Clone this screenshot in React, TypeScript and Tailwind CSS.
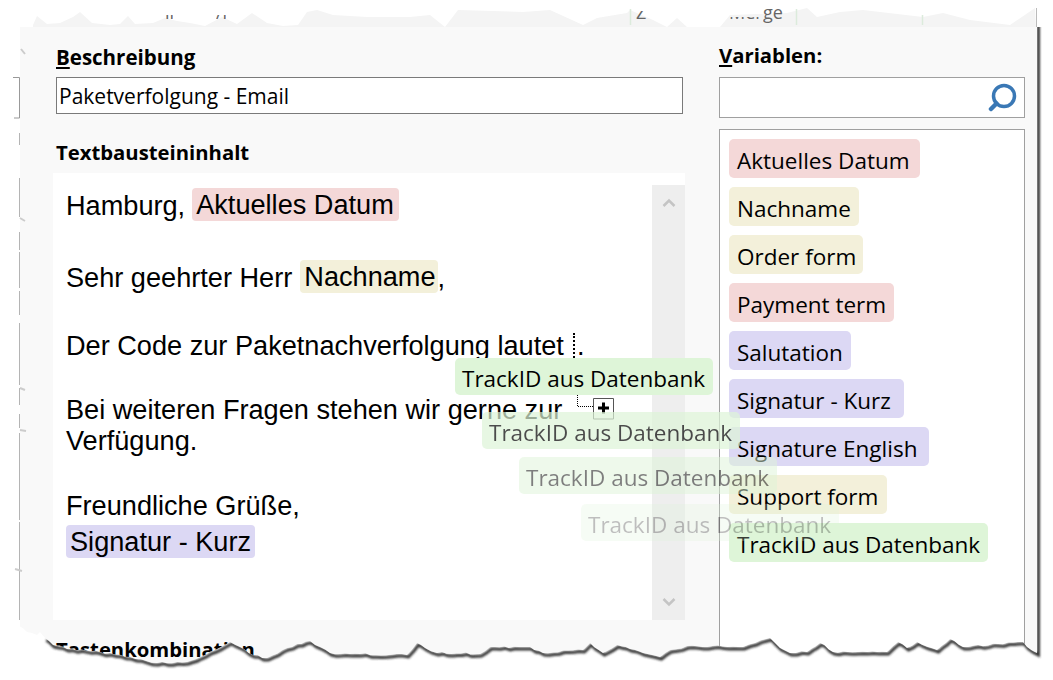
import { ReactNode } from 'react';

const RED = 'bg-[#f4d8d8]';
const YELLOW = 'bg-[#f3f0da]';
const PURPLE = 'bg-[#dcd8f4]';
const GREEN = 'bg-[#def5d8]';

const VARIABLES = [
  { label: 'Aktuelles Datum', color: RED, width: 'w-[191px]' },
  { label: 'Nachname', color: YELLOW, width: 'w-[130px]' },
  { label: 'Order form', color: YELLOW, width: 'w-[134px]' },
  { label: 'Payment term', color: RED, width: 'w-[165px]' },
  { label: 'Salutation', color: PURPLE, width: 'w-[122px]' },
  { label: 'Signatur - Kurz', color: PURPLE, width: 'w-[175px]' },
  { label: 'Signature English', color: PURPLE, width: 'w-[200px]' },
  { label: 'Support form', color: YELLOW, width: 'w-[158px]' },
  { label: 'TrackID aus Datenbank', color: GREEN, width: 'w-[259px]' },
];

const UI_FONT = "font-['Open_Sans',sans-serif]";

const TORN_BOTTOM = [
  19, 626, 27, 632, 37, 635, 40, 632, 45, 638, 53, 645, 67, 649, 100, 652, 130, 657, 157, 663, 187, 662, 200, 657, 215, 650, 230, 642, 240, 647, 253, 655, 267, 658, 287, 648, 297, 644, 310, 641, 320, 647, 330, 653, 360, 654, 407, 655, 417, 643, 425, 648, 437, 653, 480, 654, 490, 647, 523, 647, 530, 647, 543, 653, 583, 650, 590, 643, 603, 653, 617, 645, 630, 649, 643, 653, 660, 657, 670, 650, 687, 646, 743, 647, 755, 643, 770, 638, 780, 648, 790, 653, 807, 652, 820, 643, 833, 652, 887, 652, 898, 642, 907, 648, 917, 642, 937, 650, 950, 639, 963, 647, 1023, 642, 1027, 647, 1037, 653,
];

const TORN_TOP =
  '33,27 33,25 37,16 47,24 60,23 73,17 80,12 92,23 110,25 120,24 128,16 135,24 153,23 165,18 177,21 190,23 205,26 222,17 237,24 252,13 267,23 283,26 298,25 307,12 317,10 333,15 367,17 410,17 430,15 445,27 458,10 523,12 550,10 583,25 597,18 627,13 630,10 653,20 667,27 677,18 687,27 720,27 730,15 787,13 807,8 817,17 840,12 863,10 923,17 943,13 970,20 1010,25 1035,8 1036,27';

// adds small fixed wobble between the hand-read points so the tear doesn't look polygonal
function roughen(pts: number[]) {
  const out: string[] = [];
  for (let i = 0; i < pts.length - 2; i += 2) {
    const [x0, y0, x1, y1] = [pts[i], pts[i + 1], pts[i + 2], pts[i + 3]];
    const steps = Math.max(1, Math.round((x1 - x0) / 5));
    for (let s = 0; s < steps; s++) {
      const t = s / steps;
      const n = Math.sin((x0 + s * 5) * 12.9898) * 43758.5453;
      const wobble = s === 0 ? 0 : (n - Math.floor(n) - 0.5) * 2.2;
      out.push(`${(x0 + (x1 - x0) * t).toFixed(1)},${(y0 + (y1 - y0) * t + wobble).toFixed(1)}`);
    }
  }
  out.push(`${pts[pts.length - 2]},${pts[pts.length - 1]}`);
  return out;
}

function Chip({ color, children }: { color: string; children: ReactNode }) {
  return <span className={`inline-flex h-[33px] -translate-y-px items-center rounded-[4px] pt-[2px] pl-[4px] ${color}`}>{children}</span>;
}

function DragGhost({ className }: { className: string }) {
  return (
    <div className={`absolute flex h-[37px] w-[258px] items-center rounded-[5px] pt-[5px] pl-[7px] text-[22.5px] whitespace-nowrap text-black ${GREEN} ${UI_FONT} ${className}`}>
      TrackID aus Datenbank
    </div>
  );
}

function Fragment({ text, className }: { text: string; className: string }) {
  return (
    <div className={`absolute overflow-hidden text-[18px] leading-[24px] whitespace-nowrap text-[#666] ${UI_FONT} ${className}`}>
      <div className="absolute bottom-0 left-0">{text}</div>
    </div>
  );
}

function EdgeOverlay() {
  const edge = roughen(TORN_BOTTOM);
  const outer = `0,626 ${edge.join(' ')} 1037,27 1053,27 1053,680 0,680`;
  const shadow = `${edge.filter((p) => parseFloat(p) > 42).join(' ')} 1037,22`;
  return (
    <svg className="pointer-events-none absolute inset-0" width="1053" height="680" viewBox="0 0 1053 680">
      <defs>
        <clipPath id="outside">
          <polygon points={outer} />
        </clipPath>
        <filter id="blur" x="-5%" y="-5%" width="110%" height="110%">
          <feGaussianBlur stdDeviation="1.3" />
        </filter>
      </defs>
      <polygon points={outer} fill="#fff" />
      <g clipPath="url(#outside)">
        <polyline points={shadow} transform="translate(1.5,2)" fill="none" stroke="#333" strokeWidth="3" filter="url(#blur)" />
      </g>
      <g stroke="#b4b4b4" strokeWidth="1" fill="none">
        <path d="M13 77.5H19.5V118H14" stroke="#999" />
        <path d="M19.5 133V145M19.5 178V217M19.5 232V250M19.5 252V288M19.5 291V315M19.5 323V385M19.5 388V405M19.5 414V428M19.5 433V520M19.5 522V620" />
        <path d="M21 49L25 54M20 218L25 221M20 388L25 390M20 430L26 431M15 569L22 571" stroke="#ccc" strokeWidth="2" />
      </g>
    </svg>
  );
}

function DragCursor() {
  return (
    <div className="absolute top-[395px] left-[577px]">
      <svg width="37" height="25" viewBox="0 0 37 25">
        <path d="M0.5 0V11.5H16" fill="none" stroke="#000" strokeDasharray="1 1" />
        <path d="M16.5 3.5H36.5V24H16.5Z" fill="#fff" stroke="#555" />
        <path d="M26.5 7.5V18.5M21 13H32" stroke="#000" strokeWidth="3" />
      </svg>
    </div>
  );
}

export default function App() {
  return (
    <div className={`relative h-[680px] w-[1053px] overflow-hidden bg-white text-black ${UI_FONT}`}>
      <svg className="absolute inset-0" width="1053" height="30" viewBox="0 0 1053 30">
        <polygon points={TORN_TOP} fill="#f4f4f4" />
        <path d="M630.5 9V25M796.5 9V25M922.5 15V25" stroke="#dcebdc" strokeWidth="1.5" />
        <path d="M1036.5 8V27" stroke="#bbb" />
      </svg>
      <Fragment text="Z" className="top-[11px] left-[636px] h-[13px] w-[12px]" />
      <Fragment text="Men" className="top-[17px] left-[729px] h-[7px] w-[33px]" />
      <Fragment text="ge" className="top-[8px] left-[763px] h-[16px] w-[22px]" />
      <Fragment text="ll" className="top-[15px] left-[165px] h-[9px] w-[8px]" />
      <Fragment text="/l" className="top-[15px] left-[216px] h-[9px] w-[10px]" />

      <div className="pt-[27px] pl-[20px]">
        <div className="flex h-[640px] w-[1017px] bg-[#f9f9f9]">
          <div className="ml-[36px] w-[627px]">
            <h2 className="mt-[16px] text-[20.5px] leading-[28px] font-bold">
              <span className="underline underline-offset-2">B</span>eschreibung
            </h2>
            <div className="mt-[6px] flex h-[37px] items-center border border-[#7a7a7a] bg-white pt-[2px] pl-[2px] text-[21px]">
              Paketverfolgung - Email
            </div>
            <h2 className="mt-[24px] text-[20.3px] leading-[28px] font-bold">Textbausteininhalt</h2>
            <div className="relative -mx-[3px] mt-[7px] h-[447px] w-[632px] bg-white pt-[17px] pl-[13px] font-['Liberation_Sans',sans-serif] text-[27.15px]">
              <div className="flex h-[33px] items-center">
                Hamburg,
                <span className="ml-[7px] pr-[6px]">
                  <Chip color={RED}>
                    <span className="pr-[5px]">Aktuelles Datum</span>
                  </Chip>
                </span>
              </div>
              <div className="mt-[39px] flex h-[33px] items-center">
                Sehr geehrter Herr
                <span className="ml-[8px]">
                  <Chip color={YELLOW}>
                    <span className="pr-[2px]">Nachname</span>
                  </Chip>
                </span>
                ,
              </div>
              <div className="mt-[35px] flex h-[33px] items-center">
                Der Code zur Paketnachverfolgung lautet
                <span className="mr-[2px] ml-[9px] h-[28px] border-l-2 border-dotted border-black" />.
              </div>
              <div className="mt-[32px] flex h-[31px] items-center">Bei weiteren Fragen stehen wir gerne zur</div>
              <div className="flex h-[31px] items-center">Verfügung.</div>
              <div className="mt-[33px] flex h-[33px] items-center">Freundliche Grüße,</div>
              <div className="mt-[3px] flex h-[33px] items-center">
                <Chip color={PURPLE}>
                  <span className="pr-[4px]">Signatur - Kurz</span>
                </Chip>
              </div>
              <div className="absolute top-[12px] right-0 flex h-[435px] w-[33px] flex-col items-center justify-between bg-[#eeeeee] py-[13px]">
                <svg width="14" height="9" viewBox="0 0 14 9">
                  <path d="M1.5 8L7 2.5L12.5 8" fill="none" stroke="#c4c4c4" strokeWidth="2.5" />
                </svg>
                <svg width="14" height="9" viewBox="0 0 14 9">
                  <path d="M1.5 1L7 6.5L12.5 1" fill="none" stroke="#c4c4c4" strokeWidth="2.5" />
                </svg>
              </div>
            </div>
            <h2 className="mt-[15px] text-[20.3px] leading-[28px] font-bold">Tastenkombination</h2>
          </div>

          <div className="ml-[36px] w-[306px]">
            <h2 className="mt-[14px] text-[20.3px] leading-[28px] font-bold">
              <span className="underline underline-offset-2">V</span>ariablen:
            </h2>
            <div className="mt-[8px] flex h-[41px] items-center justify-end border border-[#a0a0a0] bg-white pr-[6px]">
              <svg width="30" height="30" viewBox="0 0 30 30">
                <circle cx="16" cy="13" r="10.5" fill="none" stroke="#3a78b5" strokeWidth="3.5" />
                <path d="M8.5 20.5L3 26" stroke="#3a78b5" strokeWidth="4.5" strokeLinecap="round" />
              </svg>
            </div>
            <div className="mt-[11px] flex h-[530px] flex-col items-start gap-[9px] border border-[#a0a0a0] bg-white pt-[9px] pl-[9px]">
              {VARIABLES.map((v) => (
                <div key={v.label} className={`flex h-[39px] items-center rounded-[5px] pt-[5px] pl-[8px] text-[22.5px] whitespace-nowrap ${v.color} ${v.width}`}>
                  {v.label}
                </div>
              ))}
            </div>
          </div>
        </div>
      </div>

      <DragGhost className="top-[358px] left-[455px]" />
      <DragCursor />
      <DragGhost className="top-[412px] left-[482px] opacity-70" />
      <DragGhost className="top-[457px] left-[519px] opacity-50" />
      <DragGhost className="top-[504px] left-[581px] opacity-25" />

      <EdgeOverlay />
    </div>
  );
}
